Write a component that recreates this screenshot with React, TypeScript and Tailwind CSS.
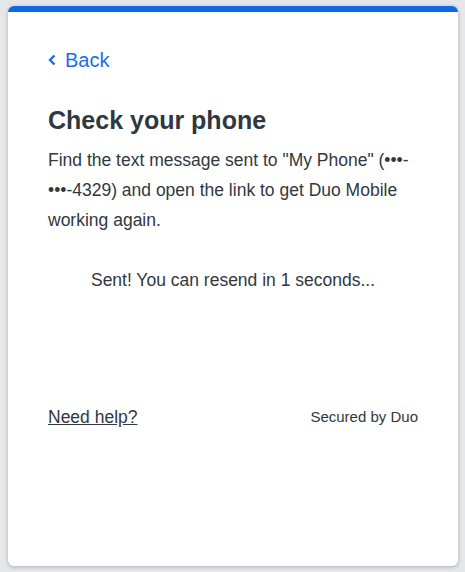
const App = () => {
  return (
    <div className="min-h-[572px] w-full bg-[#e6e7eb] pt-[6px] px-[8px] pb-[6px] font-['Liberation_Sans',Arial,sans-serif] text-[#313840]">
      <div className="h-[560px] w-[450px] overflow-hidden rounded-[6px] bg-white shadow-[0_1px_4px_rgba(0,0,0,0.25)]">
        <div className="h-[6px] bg-[#1168e3]" />
        <div className="px-[40px] pt-[34px]">
          <a href="#" className="flex h-[28px] items-center text-[20px] text-[#1a6fe6]">
            <svg width="8" height="12" viewBox="0 0 8 12" className="mr-[9px]">
              <path d="M6.5 1.5 L2 6 L6.5 10.5" fill="none" stroke="currentColor" strokeWidth="2.4" />
            </svg>
            <span>Back</span>
          </a>
          <h1 className="mt-[30px] text-[25px] font-bold leading-[32px] text-[#2f3740]">Check your phone</h1>
          <p className="mt-[9px] text-[17.5px] leading-[30px]">
            Find the text message sent to "My Phone" (•••-•••-4329) and open the link to get Duo Mobile working again.
          </p>
          <p className="mt-[30px] text-center text-[17.5px] leading-[30px]">
            Sent! You can resend in 1 seconds...
          </p>
          <div className="mt-[107px] flex items-center justify-between">
            <a href="#" className="text-[17.5px] leading-[30px] underline">Need help?</a>
            <span className="text-[15px]">Secured by Duo</span>
          </div>
        </div>
      </div>
    </div>
  );
};

export default App;
